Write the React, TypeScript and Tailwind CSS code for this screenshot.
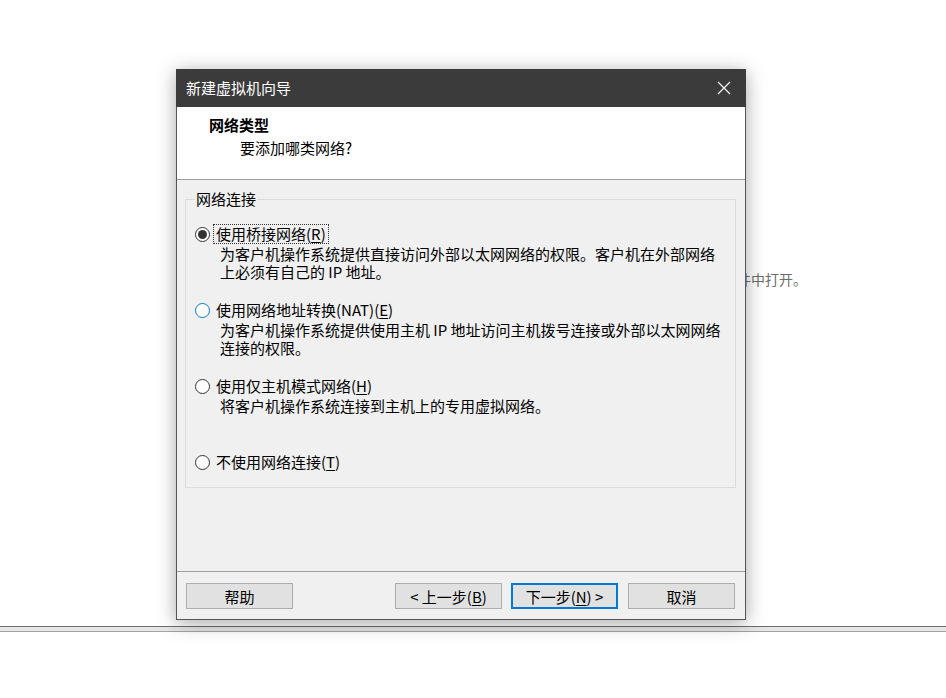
import React from 'react';

type Option = {
  label: string;
  key: string;
  desc: string[];
  state: 'checked' | 'hover' | 'plain';
  focused?: boolean;
};

const options: Option[] = [
  {
    label: '使用桥接网络',
    key: 'R',
    desc: ['为客户机操作系统提供直接访问外部以太网网络的权限。客户机在外部网络', '上必须有自己的 IP 地址。'],
    state: 'checked',
    focused: true,
  },
  {
    label: '使用网络地址转换(NAT)',
    key: 'E',
    desc: ['为客户机操作系统提供使用主机 IP 地址访问主机拨号连接或外部以太网网络', '连接的权限。'],
    state: 'hover',
  },
  {
    label: '使用仅主机模式网络',
    key: 'H',
    desc: ['将客户机操作系统连接到主机上的专用虚拟网络。'],
    state: 'plain',
  },
];

function Radio({ state }: { state: Option['state'] }) {
  const border = state === 'hover' ? 'border-[#0078d7]' : 'border-[#333333]';
  return (
    <span className={`flex items-center justify-center w-[15px] h-[15px] rounded-full border bg-white shrink-0 ${border}`}>
      {state === 'checked' && <span className="w-[9px] h-[9px] rounded-full bg-[#333333]" />}
    </span>
  );
}

function Mnemonic({ k }: { k: string }) {
  return (
    <>
      (<u className="underline-offset-[2px]">{k}</u>)
    </>
  );
}

function Button({ children, primary }: { children: React.ReactNode; primary?: boolean }) {
  return (
    <button
      className={`w-[107px] h-[26px] flex items-center justify-center bg-[#e1e1e1] text-[15px] leading-none text-black ${
        primary ? 'border-2 border-[#0078d7]' : 'border border-[#adadad]'
      }`}
    >
      {children}
    </button>
  );
}

export default function App() {
  return (
    <div className="relative w-[946px] h-[698px] bg-white overflow-hidden font-['Noto_Sans_CJK_SC','Microsoft_YaHei',sans-serif] text-black">
      {/* page behind the wizard */}
      <div className="h-[626px]">
        <div className="pt-[269px] pl-[625px] text-[14px] leading-[20px] text-[#6d6d6d] whitespace-nowrap">
          可以在新窗口或文件中打开。
        </div>
      </div>
      <div className="h-[6px] border-t border-b border-t-[#6e6e6e] border-b-[#a3a3a3] bg-[#e6e6e6]" />

      {/* wizard dialog */}
      <div className="absolute left-[176px] top-[69px] w-[570px] h-[551px] flex flex-col bg-[#f0f0f0] border border-[#555555] border-t-0 shadow-[0_3px_18px_rgba(0,0,0,0.35)]">
        <div className="h-[38px] -mx-px flex items-center justify-between bg-[#3b3b3b] pl-[10px] pr-[15px]">
          <span className="text-[15px] leading-[20px] text-white">新建虚拟机向导</span>
          <svg width="14" height="14" viewBox="0 0 14 14" className="text-[#f0f0f0]">
            <path d="M1 1 L13 13 M13 1 L1 13" stroke="currentColor" strokeWidth="1.3" fill="none" />
          </svg>
        </div>

        <div className="h-[73px] bg-white border-b border-[#a0a0a0] pl-[32px] pt-[8px]">
          <div className="text-[15px] leading-[20px] font-bold">网络类型</div>
          <div className="mt-[3px] ml-[31px] text-[15px] leading-[20px]">要添加哪类网络?</div>
        </div>

        <div className="h-[391px] pt-[19px]">
          <div className="relative ml-[8px] mr-[9px] h-[289px] border border-[#dcdcdc] pl-[9px] pt-[23px]">
            <span className="absolute left-[9px] -top-[11px] px-[1px] bg-[#f0f0f0] text-[15px] leading-[20px]">网络连接</span>

            <div className="flex flex-col gap-[18px]">
              {options.map((o) => (
                <div key={o.key}>
                  <div className="flex items-center h-[22px]">
                    <Radio state={o.state} />
                    <span
                      className={`ml-[3px] px-[2px] border text-[15px] leading-[18px] ${
                        o.focused ? 'border-dotted border-[#333333]' : 'border-transparent'
                      }`}
                    >
                      {o.label}
                      <Mnemonic k={o.key} />
                    </span>
                  </div>
                  <div className="h-[36px] pl-[25px] text-[15px] leading-[18px]">
                    {o.desc.map((d) => (
                      <div key={d} className="whitespace-nowrap">{d}</div>
                    ))}
                  </div>
                </div>
              ))}
              <div className="flex items-center h-[22px]">
                <Radio state="plain" />
                <span className="ml-[3px] px-[2px] border border-transparent text-[15px] leading-[18px]">
                  不使用网络连接
                  <Mnemonic k="T" />
                </span>
              </div>
            </div>
          </div>
        </div>

        <div className="h-[47px] border-t border-[#a0a0a0] flex items-start pt-[11px] pl-[9px] pr-[10px]">
          <Button>帮助</Button>
          <div className="ml-auto flex gap-[9px]">
            <Button>
              &lt; 上一步<Mnemonic k="B" />
            </Button>
            <Button primary>
              下一步<Mnemonic k="N" /> &gt;
            </Button>
          </div>
          <div className="ml-[10px]">
            <Button>取消</Button>
          </div>
        </div>
      </div>
    </div>
  );
}
